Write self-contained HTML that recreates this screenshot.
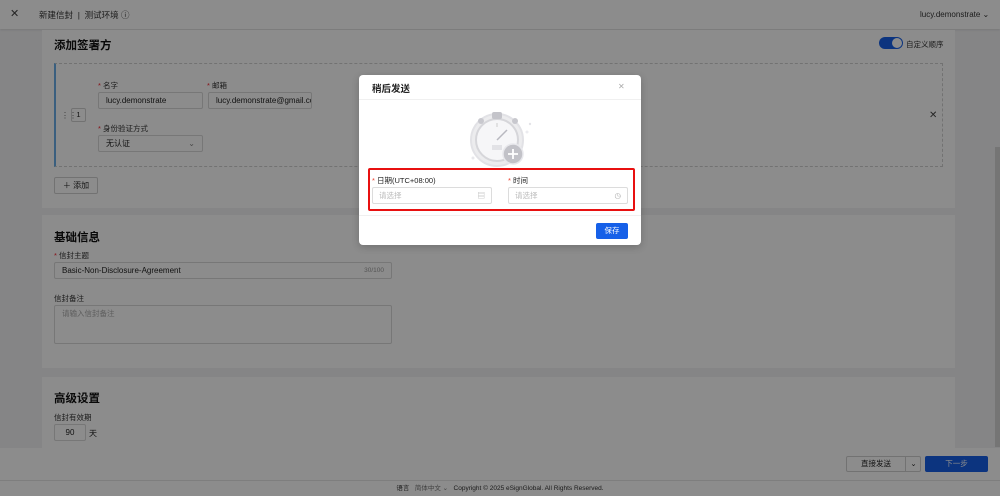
<!DOCTYPE html>
<html><head><meta charset="utf-8"><style>
*{box-sizing:border-box;margin:0;padding:0}
html,body{width:1000px;height:496px;overflow:hidden}
body{background:#f2f2f4;font-family:"Liberation Sans","Noto Sans CJK SC",sans-serif;font-size:8px;color:#222;position:relative}
.a{position:absolute}
.inp{position:absolute;border:1px solid #d9d9d9;border-radius:2px;background:#fff;font-size:8px;padding-left:7px;line-height:16px;color:#222}
.lbl{position:absolute;font-size:7.5px;color:#333}
.lbl b{color:#f5222d;font-weight:normal}
.card{position:absolute;left:42px;width:913px;background:#fff}
h2{position:absolute;font-size:11.5px;font-weight:bold;color:#111}
#ov{position:absolute;left:0;top:0;width:1000px;height:496px;background:rgba(0,0,0,0.45)}
</style></head><body>
<div class="a" style="left:0;top:0;width:1000px;height:29px;background:#fff;box-shadow:0 1px 2px rgba(0,0,0,.1)"></div>
<div class="a" style="left:10px;top:7px;font-size:11px;color:#444">✕</div>
<div class="a" style="left:39px;top:9px;font-size:8.5px;color:#333">新建信封 &nbsp;|&nbsp; 测试环境 ⓘ</div>
<div class="a" style="left:920px;top:10px;font-size:8px;color:#333">lucy.demonstrate ⌄</div>

<div class="card" style="top:30px;height:178px"></div>
<h2 style="left:54px;top:37px">添加签署方</h2>
<div class="a" style="left:879px;top:37px;width:24px;height:12px;border-radius:6px;background:#1660e8"></div>
<div class="a" style="left:892px;top:38px;width:10px;height:10px;border-radius:5px;background:#fff"></div>
<div class="a" style="left:906px;top:39px;font-size:7.5px;color:#333">自定义顺序</div>
<div class="a" style="left:54px;top:63px;width:889px;height:104px;border:1px dashed #d0d0d0;border-left:2px solid #6aaee8"></div>
<div class="a" style="left:61px;top:111px;font-size:8px;color:#666">⋮⋮</div>
<div class="a" style="left:71px;top:108px;width:15px;height:14px;border:1px solid #d0d0d0;border-radius:2px;font-size:7.5px;text-align:center;line-height:12px">1</div>
<div class="lbl" style="left:98px;top:80px"><b>*</b> 名字</div>
<div class="inp" style="left:98px;top:92px;width:105px;height:17px">lucy.demonstrate</div>
<div class="lbl" style="left:207px;top:80px"><b>*</b> 邮箱</div>
<div class="inp" style="left:208px;top:92px;width:104px;height:17px;overflow:hidden;white-space:nowrap">lucy.demonstrate@gmail.com</div>
<div class="lbl" style="left:98px;top:123px"><b>*</b> 身份验证方式</div>
<div class="inp" style="left:98px;top:135px;width:105px;height:17px">无认证<span style="position:absolute;right:7px;color:#888">⌄</span></div>
<div class="a" style="left:929px;top:110px;font-size:10px;color:#444">✕</div>
<div class="a" style="left:54px;top:177px;width:44px;height:17px;border:1px solid #d0d0d0;border-radius:2px;font-size:8px;line-height:15px;text-align:center">＋ 添加</div>

<div class="card" style="top:215px;height:153px"></div>
<h2 style="left:54px;top:229px">基础信息</h2>
<div class="lbl" style="left:54px;top:250px"><b>*</b> 信封主题</div>
<div class="inp" style="left:54px;top:262px;width:338px;height:17px">Basic-Non-Disclosure-Agreement<span style="position:absolute;right:7px;color:#999;font-size:6.5px">30/100</span></div>
<div class="lbl" style="left:54px;top:293px">信封备注</div>
<div class="inp" style="left:54px;top:305px;width:338px;height:39px;color:#aaa;font-size:7.5px">请输入信封备注</div>

<div class="card" style="top:377px;height:71px"></div>
<h2 style="left:54px;top:390px">高级设置</h2>
<div class="lbl" style="left:54px;top:412px">信封有效期</div>
<div class="inp" style="left:54px;top:424px;width:32px;height:17px;text-align:center;padding:0">90</div>
<div class="a" style="left:89px;top:428px;font-size:8px">天</div>

<div class="a" style="left:0;top:448px;width:1000px;height:33px;background:#fff;border-bottom:1px solid #e6e6e6"></div>
<div class="a" style="left:846px;top:456px;width:75px;height:16px;border:1px solid #d0d0d0;border-radius:2px;font-size:7.5px;line-height:14px"><span style="position:absolute;left:0;width:58px;text-align:center">直接发送</span><span style="position:absolute;left:58px;top:0;width:16px;height:14px;border-left:1px solid #d0d0d0;text-align:center">⌄</span></div>
<div class="a" style="left:925px;top:456px;width:63px;height:16px;background:#1660e8;border-radius:2px;color:#fff;font-size:7.5px;text-align:center;line-height:16px">下一步</div>
<div class="a" style="left:0;top:481px;width:1000px;text-align:center;font-size:6.5px;color:#333;line-height:15px;background:#fff">语言 &nbsp; <span style="color:#777">简体中文 ⌄</span> &nbsp; Copyright © 2025 eSignGlobal. All Rights Reserved.</div>
<div class="a" style="left:995px;top:147px;width:5px;height:300px;background:#d6d6d6"></div>

<div id="ov"></div>

<!-- modal -->
<div class="a" style="left:359px;top:75px;width:282px;height:170px;background:#fff;border-radius:4px;box-shadow:0 2px 8px rgba(0,0,0,.2)"></div>
<div class="a" style="left:372px;top:81px;font-size:9.5px;color:#222;font-weight:bold">稍后发送</div>
<div class="a" style="left:618px;top:82px;font-size:8px;color:#aaa">✕</div>
<div class="a" style="left:359px;top:99px;width:282px;height:1px;background:#f0f0f0"></div>
<svg class="a" style="left:460px;top:108px" width="80" height="60" viewBox="460 108 80 60">
<circle cx="497" cy="140" r="26" fill="#ececee" stroke="#e2e2e6" stroke-width="2"/>
<circle cx="497" cy="140" r="21" fill="#f6f6f8" stroke="#d6d6da" stroke-width="2"/>
<rect x="492" y="112" width="10" height="7" rx="2" fill="#c4c4ca"/>
<circle cx="481" cy="121" r="3" fill="#c8c8ce"/><circle cx="515" cy="121" r="3" fill="#c8c8ce"/>
<line x1="497" y1="123" x2="497" y2="127" stroke="#ccc"/>
<line x1="497" y1="140" x2="507" y2="130" stroke="#b8b8c0" stroke-width="1.5"/>
<rect x="492" y="145" width="10" height="5" fill="#e2e2e6"/>
<circle cx="513" cy="154" r="10" fill="#c2c2c8" stroke="#e8e8ec" stroke-width="1.5"/>
<path d="M513 149v10M508 154h10" stroke="#fff" stroke-width="1.8"/>
<circle cx="530" cy="124" r="1.2" fill="#e4e4e8"/><circle cx="473" cy="158" r="1.5" fill="#e8e8ec"/><circle cx="527" cy="132" r="1.5" fill="#ececf0"/>
</svg>
<div class="a" style="left:368px;top:168px;width:267px;height:43px;border:2px solid #e81010;border-radius:2px"></div>
<div class="a" style="left:372px;top:175px;font-size:7.5px;color:#222"><span style="color:#e43">*</span> 日期(UTC+08:00)</div>
<div class="a" style="left:372px;top:187px;width:120px;height:17px;border:1px solid #dcdcdc;border-radius:2px;font-size:7.5px;color:#bbb;padding-left:6px;line-height:15px">请选择<span style="position:absolute;right:6px;color:#aaa">▤</span></div>
<div class="a" style="left:508px;top:175px;font-size:7.5px;color:#222"><span style="color:#e43">*</span> 时间</div>
<div class="a" style="left:508px;top:187px;width:120px;height:17px;border:1px solid #dcdcdc;border-radius:2px;font-size:7.5px;color:#bbb;padding-left:6px;line-height:15px">请选择<span style="position:absolute;right:6px;color:#aaa">◷</span></div>
<div class="a" style="left:359px;top:215px;width:282px;height:1px;background:#f0f0f0"></div>
<div class="a" style="left:596px;top:223px;width:32px;height:16px;background:#1660e8;border-radius:2px;color:#fff;font-size:7.5px;text-align:center;line-height:16px">保存</div>
</body></html>
